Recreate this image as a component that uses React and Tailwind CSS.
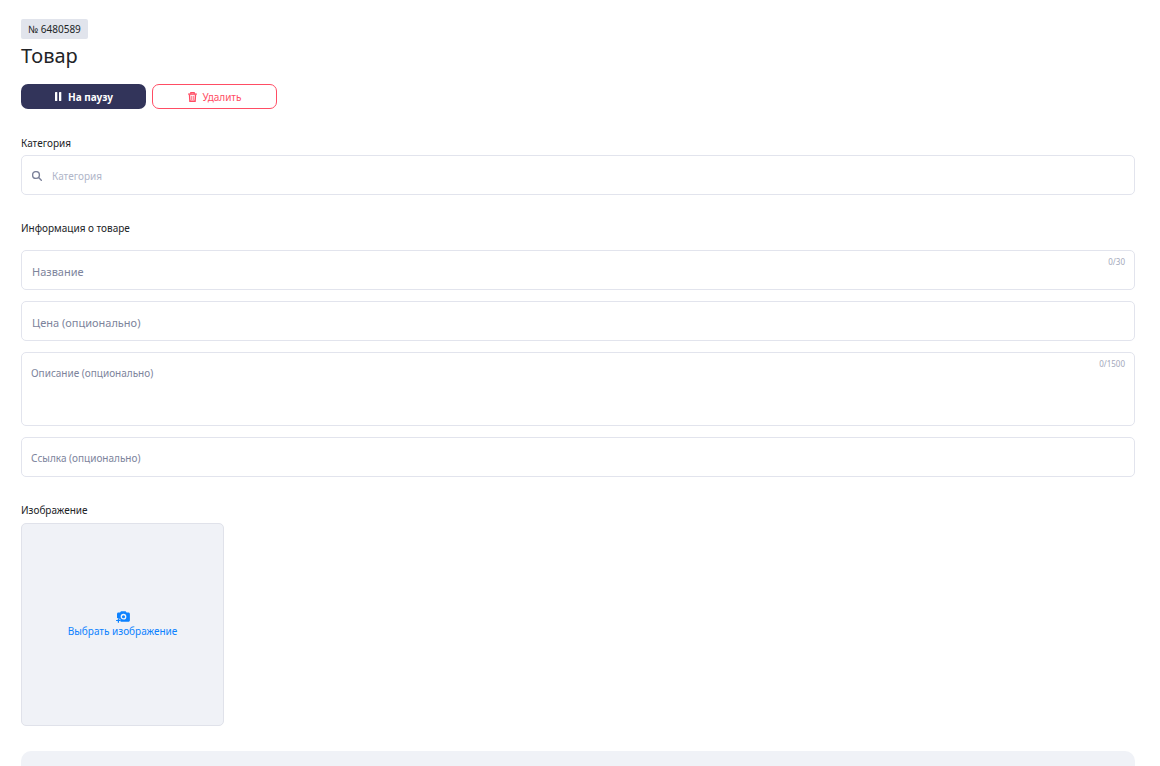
import { useState } from 'react'

const FIELD = 'block w-full rounded-[5px] border border-[#e2e4ed] bg-white text-[#2b2d33] placeholder:text-[#7d849c] placeholder:opacity-100 focus:outline-none focus:border-[#32345a]'

function PauseIcon() {
  return (
    <svg width="8" height="9" viewBox="0 0 8 9" fill="currentColor" aria-hidden="true">
      <rect x="1" width="2.3" height="9" rx="0.6" />
      <rect x="5" width="2.3" height="9" rx="0.6" />
    </svg>
  )
}

function TrashIcon() {
  return (
    <svg width="9" height="10" viewBox="0 0 9 10" fill="none" stroke="currentColor" aria-hidden="true">
      <path d="M0.2 2.1h8.6" strokeWidth="1.4" />
      <path d="M2.8 2V0.7h3.4V2" strokeWidth="1.2" />
      <path d="M1.5 2.6l0.4 6.7h5.2l0.4-6.7" strokeWidth="1.4" />
      <path d="M3.7 3.8v4.4M5.3 3.8v4.4" strokeWidth="0.8" />
    </svg>
  )
}

function SearchIcon() {
  return (
    <svg width="10" height="10" viewBox="0 0 10 10" fill="none" stroke="currentColor" strokeWidth="1.4" strokeLinecap="round" aria-hidden="true">
      <circle cx="4" cy="4" r="3.4" />
      <path d="M6.6 6.6l2.7 2.7" />
    </svg>
  )
}

function CameraIcon() {
  return (
    <svg width="14" height="12" viewBox="0 0 14 12" aria-hidden="true">
      <path
        d="M2.4 1.5H4L5 0.2h4.6l1 1.3h1.8c0.9 0 1.5 0.6 1.5 1.5v6.2c0 0.9-0.6 1.5-1.5 1.5H4.6V8.4H3.2V7H1V3c0-0.9 0.6-1.5 1.4-1.5z"
        fill="#0d82ff"
      />
      <circle cx="7.5" cy="5.7" r="2.2" fill="#0d82ff" stroke="#f0f2f7" strokeWidth="1.3" />
      <path d="M2.4 7.2v4.6M0.1 9.5h4.6" stroke="#0d82ff" strokeWidth="1.2" />
    </svg>
  )
}

function Field({ label, value, onChange, max, className }) {
  return (
    <div className="relative">
      <input
        aria-label={label}
        placeholder={label}
        value={value}
        maxLength={max}
        onChange={e => onChange(e.target.value)}
        className={`${FIELD} h-10 ${className}`}
      />
      {max && <Counter value={value} max={max} />}
    </div>
  )
}

function Counter({ value, max }) {
  return (
    <span className="absolute top-[7px] right-[10px] text-[8px] leading-[10px] text-[#a3a8ba]">
      {value.length}/{max}
    </span>
  )
}

export default function App() {
  const [paused, setPaused] = useState(false)
  const [form, setForm] = useState({ category: '', name: '', price: '', description: '', link: '' })
  const set = (k, v) => setForm(f => ({ ...f, [k]: v }))

  return (
    <main className="flex min-h-screen flex-col pt-[19px] pl-[21px] pr-[25px] font-['Noto_Sans',sans-serif] text-[10px] leading-4 text-[#222427]">
      <header>
        <span className="flex h-5 w-fit items-center rounded-[2px] bg-[#e1e4ec] px-[7px]">№ 6480589</span>
        <h1 className="text-[20px] leading-[34px]">Товар</h1>
        <div className="mt-[11px] flex gap-[6px]">
          <button
            type="button"
            aria-pressed={paused}
            onClick={() => setPaused(p => !p)}
            className="flex h-[25px] w-[125px] items-center justify-center gap-[6px] rounded-[7px] bg-[#32345a] font-bold text-white"
          >
            <PauseIcon />
            На паузу
          </button>
          <button
            type="button"
            className="flex h-[25px] w-[125px] items-center justify-center gap-[6px] rounded-[7px] border border-[#ff4d64] text-[#ff4d64]"
          >
            <TrashIcon />
            Удалить
          </button>
        </div>
      </header>

      <section className="mt-[26px]">
        <label htmlFor="category" className="block">Категория</label>
        <div className="relative mt-1">
          <span className="pointer-events-none absolute inset-y-0 left-[11px] flex items-center pt-px text-[#7b8199]">
            <SearchIcon />
          </span>
          <input
            id="category"
            type="search"
            placeholder="Категория"
            value={form.category}
            onChange={e => set('category', e.target.value)}
            className="block h-10 w-full rounded-[5px] border border-[#e2e4ed] bg-white pt-px pr-3 pl-[30px] placeholder:text-[#b0b6c9] placeholder:opacity-100 focus:border-[#32345a] focus:outline-none"
          />
        </div>
      </section>

      <section className="mt-[25px]">
        <h2>Информация о товаре</h2>
        <div className="mt-[14px] flex flex-col gap-[11px]">
          <Field label="Название" value={form.name} max={30} onChange={v => set('name', v)} className="px-[10px] pt-[3px] text-[11px]" />
          <Field label="Цена (опционально)" value={form.price} onChange={v => set('price', v)} className="px-[10px] pt-[3px] text-[11px]" />
          <div className="relative">
            <textarea
              aria-label="Описание (опционально)"
              placeholder="Описание (опционально)"
              value={form.description}
              maxLength={1500}
              onChange={e => set('description', e.target.value)}
              className={`${FIELD} h-[74px] resize-none px-[9px] pt-3`}
            />
            <Counter value={form.description} max={1500} />
          </div>
          <Field label="Ссылка (опционально)" value={form.link} onChange={v => set('link', v)} className="px-[9px] pt-px" />
        </div>
      </section>

      <section className="mt-[25px]">
        <h2>Изображение</h2>
        <button
          type="button"
          className="mt-[5px] flex size-[203px] flex-col items-center justify-center rounded-[5px] border border-[#e0e2ea] bg-[#f0f2f7] text-[#0d82ff]"
        >
          <CameraIcon />
          Выбрать изображение
        </button>
      </section>

      <div className="mt-[25px] flex-1 rounded-t-[10px] bg-[#f0f2f7]" />
    </main>
  )
}
